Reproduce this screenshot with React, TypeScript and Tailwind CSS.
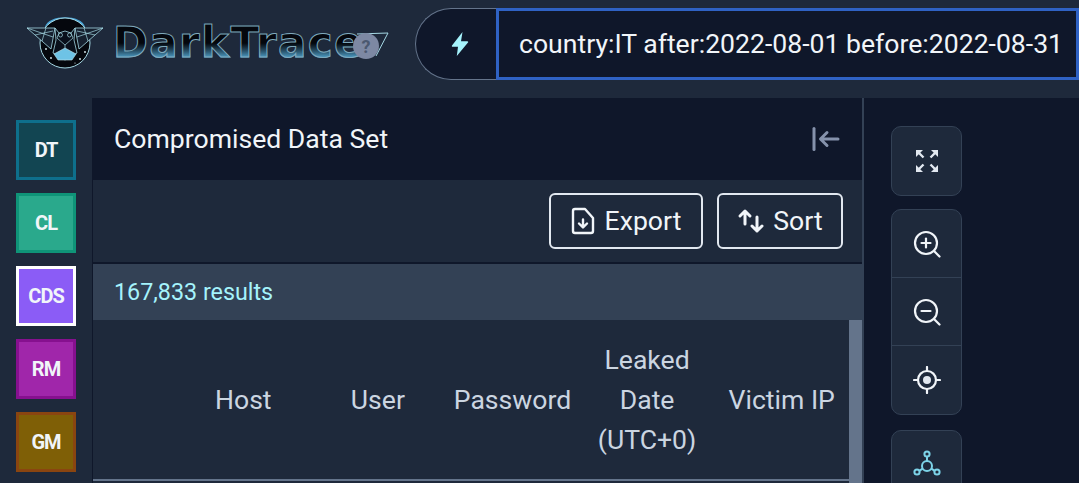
import React from 'react';

const railItems = [
  { label: 'DT', cls: 'bg-[#124552] border-[#0e6f8c]' },
  { label: 'CL', cls: 'bg-[#2aa98c] border-[#0f9478]' },
  { label: 'CDS', cls: 'bg-[#8b5cf6] border-white' },
  { label: 'RM', cls: 'bg-[#a026aa] border-[#86108f]' },
  { label: 'GM', cls: 'bg-[#7f5f06] border-[#8a4510]' },
];

const Logo = () => (
  <svg width="78" height="54" viewBox="0 0 78 54" className="shrink-0" fill="none">
    <path d="M19 11 C22 -2 56 -2 59 11 Z" fill="#4aa5d8" />
    <circle cx="39" cy="27" r="25" fill="#05070d" stroke="#a5d8e4" strokeWidth="1" />
    <g fill="#16202f" stroke="#a5d8e4" strokeWidth="0.8" strokeLinejoin="round">
      <path d="M1 12 H29 L25 33 Z" />
      <path d="M77 12 H49 L53 33 Z" />
    </g>
    <g stroke="#a5d8e4" strokeWidth="0.7">
      <path d="M1 12 L27 21 M9 19 L27 15 M16 25 L20 12" />
      <path d="M77 12 L51 21 M69 19 L51 15 M62 25 L58 12" />
    </g>
    <path d="M29 12 L33 17 L39 15 L45 17 L49 12 L48 24 L51 37 L39 44 L27 37 L30 24 Z" fill="#0a101b" stroke="#a5d8e4" strokeWidth="0.8" strokeLinejoin="round" />
    <path d="M31 22 L39 29 L47 22 M39 29 V38 M33 17 L31 22 M45 17 L47 22" stroke="#a5d8e4" strokeWidth="0.7" />
    <circle cx="34.5" cy="19" r="2" stroke="#a5d8e4" strokeWidth="0.7" />
    <circle cx="43.5" cy="19" r="2" stroke="#a5d8e4" strokeWidth="0.7" />
    <path d="M28 38 L39 32 L50 38 L46 44 H32 Z" fill="#6ec3e6" stroke="#bfe6ef" strokeWidth="0.6" strokeLinejoin="round" />
    <g fill="#dff3f8">
      <circle cx="20" cy="33" r="0.9" />
      <circle cx="25" cy="42" r="0.9" />
      <circle cx="54" cy="43" r="0.9" />
      <circle cx="59" cy="36" r="0.9" />
      <circle cx="49" cy="47" r="0.6" />
    </g>
  </svg>
);

const Bolt = () => (
  <svg width="20" height="26" viewBox="0 0 20 26" fill="#a5f3fc">
    <path d="M12.5 1 L2 14.5 C1.6 15.2 2 15.8 2.7 15.8 L8 15.8 L6.8 25 L18 11.6 C18.5 11 18.1 10.2 17.4 10.2 L11 10.2 Z" />
  </svg>
);

const CollapseIcon = () => (
  <svg width="28" height="24" viewBox="0 0 28 24" fill="none" stroke="#8592ab" strokeWidth="3" strokeLinecap="round" strokeLinejoin="round">
    <path d="M2 1.5 V22.5" />
    <path d="M26 12 H9 M15 5.5 L8.5 12 L15 18.5" />
  </svg>
);

const ExportIcon = () => (
  <svg width="24" height="28" viewBox="0 0 24 28" fill="none" stroke="#f1f5f9" strokeWidth="2.4" strokeLinecap="round" strokeLinejoin="round">
    <path d="M4 2 H14 L22 11 V24 C22 25.3 21 26 20 26 H4 C2.8 26 2 25.2 2 24 V4 C2 2.8 2.8 2 4 2 Z" />
    <path d="M12 12.5 V20 M8 16.5 L12 20.5 L16 16.5" />
  </svg>
);

const SortIcon = () => (
  <svg width="28" height="26" viewBox="0 0 28 26" fill="none" stroke="#f1f5f9" strokeWidth="3" strokeLinecap="round" strokeLinejoin="round">
    <path d="M8 16 V3 M3 8 L8 3 L13 8" />
    <path d="M20 9 V23 M15 18 L20 23 L25 18" />
  </svg>
);

const ExpandIcon = () => (
  <svg width="24" height="24" viewBox="0 0 24 24" fill="none" stroke="#e2e8f0" strokeWidth="2.4">
    <path d="M8.5 8.5 L2.5 2.5 M21.5 2.5 L15.5 8.5 M2.5 21.5 L8.5 15.5 M15.5 15.5 L21.5 21.5" />
    <g fill="#e2e8f0" stroke="none">
      <path d="M1 1 H8 L1 8 Z" />
      <path d="M23 1 V8 L16 1 Z" />
      <path d="M1 23 V16 L8 23 Z" />
      <path d="M23 23 H16 L23 16 Z" />
    </g>
  </svg>
);

const ZoomIcon = ({ plus }: { plus?: boolean }) => (
  <svg width="28" height="28" viewBox="0 0 28 28" fill="none" stroke="#f1f5f9" strokeWidth="2.2" strokeLinecap="round">
    <circle cx="13" cy="13" r="11" />
    <path d="M21 21 L26.5 26.5" />
    <path d="M8.5 13 H17.5" />
    {plus && <path d="M13 8.5 V17.5" />}
  </svg>
);

const LocateIcon = () => (
  <svg width="28" height="28" viewBox="0 0 28 28" fill="none" stroke="#f1f5f9" strokeWidth="2.2" strokeLinecap="round">
    <circle cx="14" cy="14" r="9" />
    <circle cx="14" cy="14" r="4" fill="#e2e8f0" stroke="none" />
    <path d="M14 1 V5 M14 23 V27 M1 14 H5 M23 14 H27" />
  </svg>
);

const GraphIcon = () => (
  <svg width="28" height="26" viewBox="0 0 28 26" fill="none" stroke="#7dd3e8" strokeWidth="2">
    <circle cx="14" cy="4" r="2.6" />
    <circle cx="4" cy="22" r="2.6" />
    <circle cx="24" cy="22" r="2.6" />
    <circle cx="14" cy="16" r="5" />
    <path d="M14 6.6 V11 M6.3 20.8 L9.6 18.6 M21.7 20.8 L18.4 18.6" />
  </svg>
);

const App: React.FC = () => {
  return (
    <div className="h-[483px] w-[1079px] overflow-hidden bg-[#0f172a] font-['Roboto',sans-serif] text-[26.6px]">
      {/* Header */}
      <header className="flex h-[98px] items-start bg-[#1e293b]">
        <div className="relative mt-[16px] ml-[26px] flex w-[389px] shrink-0 items-start">
          <Logo />
          <span className="mt-[3px] ml-[9px] font-['DejaVu_Sans',sans-serif] text-[42px] font-bold leading-[48px] tracking-[1.4px] whitespace-nowrap bg-gradient-to-b from-[#04070d] from-50% to-[#5ab8e6] to-85% bg-clip-text text-transparent [-webkit-text-stroke:1px_#7fa9bd]">
            DarkTrace
          </span>
          {/* tail of the logo and the help badge on top of it */}
          <svg width="46" height="26" viewBox="0 0 46 26" fill="none" className="absolute top-[16px] left-[317px]">
            <path d="M14 2 L45 1 L33 24" stroke="#a5d8e4" strokeWidth="1" />
          </svg>
          <div className="absolute top-[17px] left-[327px] flex h-[26px] w-[26px] items-center justify-center rounded-full bg-[#7d88a3] text-[18px] font-bold text-[#4b5870]">
            ?
          </div>
        </div>
        <div className="mt-[8px] flex h-[72px] flex-1">
          <div className="flex w-[81px] items-center justify-center rounded-l-full border border-r-0 border-[#64748b] bg-[#0f172a] pl-2">
            <Bolt />
          </div>
          <div className="flex flex-1 items-center border-[3px] border-[#2f62c4] bg-[#0f172a] pl-[20px] text-[#f1f5f9] whitespace-nowrap">
            country:IT after:2022-08-01 before:2022-08-31
          </div>
        </div>
      </header>

      <main className="flex h-[385px]">
        {/* Left rail */}
        <nav className="flex w-[93px] shrink-0 flex-col gap-[13px] border-r border-[#0f172a] bg-[#1e293b] pt-[22px] pl-[16px]">
          {railItems.map((item) => (
            <div
              key={item.label}
              className={`flex h-[60px] w-[60px] shrink-0 items-center justify-center border-[3px] text-[20px] font-bold tracking-[-1px] text-[#f1f5f9] ${item.cls}`}
            >
              {item.label}
            </div>
          ))}
        </nav>

        {/* Panel */}
        <section className="relative flex w-[771px] shrink-0 flex-col border-r-2 border-[#334155]">
          <div className="flex h-[82px] shrink-0 items-center justify-between bg-[#0f172a] pr-[22px] pl-[21px] text-[#f1f5f9]">
            <span>Compromised Data Set</span>
            <CollapseIcon />
          </div>
          <div className="flex h-[84px] shrink-0 items-center justify-end gap-[14px] border-b-2 border-[#0f172a] bg-[#1e293b] pr-[19px]">
            <button className="flex h-[56px] w-[154px] items-center justify-center gap-[10px] rounded-md border-2 border-[#e2e8f0] text-[#f1f5f9]">
              <ExportIcon />
              Export
            </button>
            <button className="flex h-[56px] w-[126px] items-center justify-center gap-[8px] rounded-md border-2 border-[#e2e8f0] text-[#f1f5f9]">
              <SortIcon />
              Sort
            </button>
          </div>
          <div className="flex h-[56px] shrink-0 items-center bg-[#334155] pl-[21px] text-[23.3px] text-[#a5f3fc]">
            167,833 results
          </div>
          <div className="flex flex-1 bg-[#1e293b]">
            <div className="grid h-[161px] flex-1 grid-cols-[83px_repeat(5,1fr)] items-center border-b-2 border-[#64748b] text-center leading-[40px] text-[#cbd5e1]">
              <span />
              <span>Host</span>
              <span>User</span>
              <span>Password</span>
              <span className="px-4">Leaked Date (UTC+0)</span>
              <span>Victim IP</span>
            </div>
            <div className="w-[13px] shrink-0 bg-[#64748b]" />
          </div>
        </section>

        {/* Map controls */}
        <aside className="flex flex-1 flex-col pt-[28px] pl-[27px]">
          <div className="flex h-[70px] w-[71px] shrink-0 items-center justify-center rounded-[10px] border border-[#334155] bg-[#1e293b]">
            <ExpandIcon />
          </div>
          <div className="mt-[13px] flex w-[71px] shrink-0 flex-col divide-y divide-[#334155] rounded-[10px] border border-[#334155] bg-[#1e293b]">
            <div className="flex h-[68px] items-center justify-center"><ZoomIcon plus /></div>
            <div className="flex h-[68px] items-center justify-center"><ZoomIcon /></div>
            <div className="flex h-[68px] items-center justify-center"><LocateIcon /></div>
          </div>
          <div className="mt-[15px] flex h-[70px] w-[71px] shrink-0 justify-center rounded-[10px] border border-[#334155] bg-[#1e293b] pt-[19px]">
            <GraphIcon />
          </div>
        </aside>
      </main>
    </div>
  );
};

export default App;
